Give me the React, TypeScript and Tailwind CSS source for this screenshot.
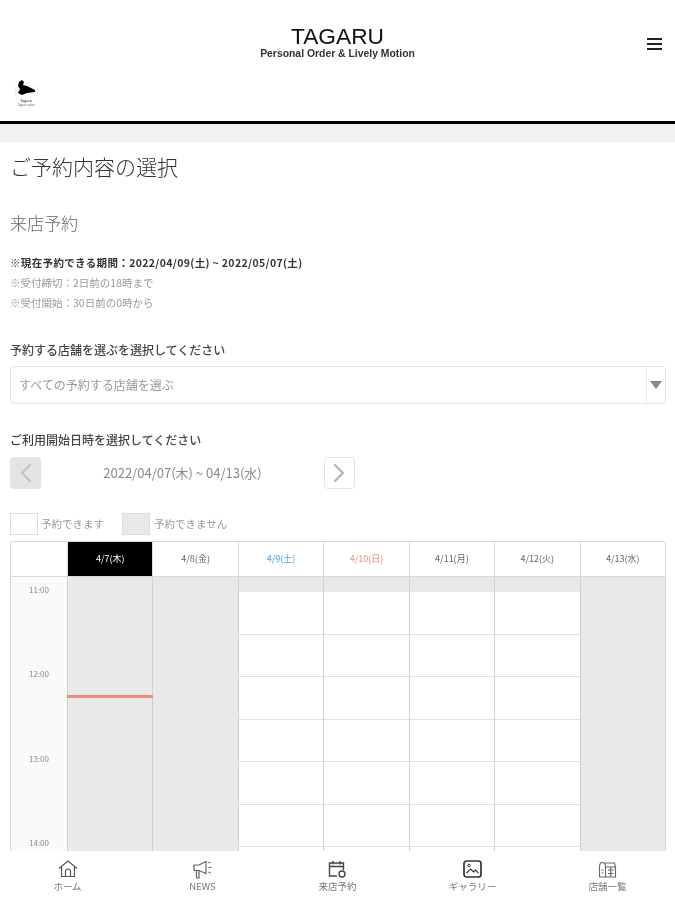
import { ChevronLeft, ChevronRight } from "lucide-react";

const JP = "font-['Noto_Sans_CJK_JP','Noto_Sans',sans-serif]";

const DAYS = [
  { label: "4/7(木)", color: "text-white", bg: "bg-black", open: false },
  { label: "4/8(金)", color: "text-[#666]", bg: "bg-white", open: false },
  { label: "4/9(土)", color: "text-[#4a9fdc]", bg: "bg-white", open: true },
  { label: "4/10(日)", color: "text-[#f08a80]", bg: "bg-white", open: true },
  { label: "4/11(月)", color: "text-[#666]", bg: "bg-white", open: true },
  { label: "4/12(火)", color: "text-[#666]", bg: "bg-white", open: true },
  { label: "4/13(水)", color: "text-[#666]", bg: "bg-white", open: false },
];

const SLOTS = [0, 1, 2, 3, 4, 5, 6];
const HOURS = ["11:00", "12:00", "13:00", "14:00"];

function HomeIcon() {
  return (
    <svg width="20" height="18" viewBox="0 0 20 18" fill="none" stroke="#555" strokeWidth="1.2">
      <path d="M1 8.5L10 1l9 7.5" />
      <path d="M3.5 7v9.5h13V7" />
      <path d="M7.5 16.5v-5a2.5 2.5 0 0 1 5 0v5" />
    </svg>
  );
}

function NewsIcon() {
  return (
    <svg width="20" height="19" viewBox="0 0 20 19" fill="none" stroke="#666" strokeWidth="1.2">
      <path d="M1 5h5l7-3.5v12L6 10.5H1z" />
      <path d="M3.5 10.5V18h2.5v-7.5" />
      <path d="M15.5 3l2-1M15.5 7.5h3M15.5 12l2 1" />
    </svg>
  );
}

function ReserveIcon() {
  return (
    <svg width="19" height="18" viewBox="0 0 19 18" fill="none" stroke="#444" strokeWidth="1.4">
      <path d="M9 16H1.5V3h14v7" />
      <path d="M1.5 6.5h14M5 1v3.5M12 1v3.5" />
      <circle cx="14" cy="14" r="3" />
    </svg>
  );
}

function GalleryIcon() {
  return (
    <svg width="19" height="18" viewBox="0 0 19 18" fill="none" stroke="#333">
      <rect x="1" y="1" width="17" height="16" rx="2.5" strokeWidth="1.7" />
      <path d="M3.5 13l4-4 3 3 2-2 3 3" strokeWidth="1.1" />
      <circle cx="6" cy="5.5" r="1.3" strokeWidth="1" />
    </svg>
  );
}

function ShopIcon() {
  return (
    <svg width="19" height="17" viewBox="0 0 19 17" fill="none" stroke="#666" strokeWidth="1.1">
      <path d="M1.5 6v10h16V6" />
      <path d="M1.5 6c0-3 1-4.5 3-4.5S7.500 3 7.500 6" />
      <path d="M7 2h9.500l1 4h-10" />
      <path d="M7.500 6v10M10 9h5.500M10 12.500h5.500M12.700 6v10" />
      <path d="M3.500 9h2M3.500 12h2" />
    </svg>
  );
}

function Logo() {
  return (
    <div className="flex w-[28px] flex-col items-center">
      <svg width="26" height="19" viewBox="0 0 26 19">
        <path d="M1 8l5-1M25 7l-4 2M2 8l1 9M25 7l-1 10" stroke="#e8e8e8" strokeWidth="0.8" fill="none" />
        <path d="M6 2l3-2 2 2-1 3 4 1 8 4v2l-8 1-5 2-4-2 2-4-2-3z" fill="#000" />
      </svg>
      <span className="font-['Liberation_Sans',sans-serif] text-[4px] leading-[4px] text-[#333]">Tagaru</span>
      <span className="font-['Liberation_Sans',sans-serif] text-[3px] leading-[4px] text-[#666]">Tagaru salon</span>
    </div>
  );
}

function TimeColumn() {
  return (
    <div className="flex flex-col bg-[#fafafa]">
      {HOURS.map((hour) => (
        <div key={hour} className="h-[84.4px] pt-[6px] text-center text-[8px] leading-[14px] text-[#888]">
          {hour}
        </div>
      ))}
    </div>
  );
}

function DayColumn({ open }: { open: boolean }) {
  if (!open) {
    return <div className="h-full border-l border-[#d0d0d0] bg-[#e9e9e9]" />;
  }
  return (
    <div className="h-full border-l border-[#d0d0d0] bg-white">
      <div className="h-[15px] bg-[#e9e9e9]" />
      {SLOTS.map((slot) => (
        <div key={slot} className="h-[42.5px] border-b border-[#e0e0e0]" />
      ))}
    </div>
  );
}

function Calendar() {
  return (
    <div className="overflow-hidden rounded-t-[3px] border border-b-0 border-[#d8d8d8]">
      <div className="grid h-[35px] grid-cols-[56px_repeat(7,1fr)] border-b border-[#d8d8d8]">
        <div className="bg-white" />
        {DAYS.map((day) => (
          <div
            key={day.label}
            className={`flex items-center justify-center border-l border-[#d8d8d8] text-[9px] ${day.bg} ${day.color}`}
          >
            {day.label}
          </div>
        ))}
      </div>
      <div className="relative grid h-[280px] grid-cols-[56px_repeat(7,1fr)]">
        <TimeColumn />
        {DAYS.map((day) => (
          <DayColumn key={day.label} open={day.open} />
        ))}
        <div className="absolute left-[56px] top-[118px] h-[3px] w-[86px] bg-[#f08a7a]" />
      </div>
    </div>
  );
}

function NavItem({ icon, label }: { icon: React.ReactNode; label: string }) {
  return (
    <div className="flex flex-col items-center">
      <div className="flex h-[20px] items-center">{icon}</div>
      <span className="mt-[1px] text-[9.5px] leading-[12px] text-[#777]">{label}</span>
    </div>
  );
}

export default function App() {
  return (
    <div className={`flex h-[900px] w-[675px] flex-col overflow-hidden bg-white blur-[0.5px] ${JP}`}>
      <header className="h-[124px] shrink-0 border-b-[3px] border-black bg-white">
        <div className="relative flex h-[76px] flex-col items-center pt-[25px]">
          <div className="font-['Liberation_Sans',sans-serif] text-[22.7px] leading-[22px] text-[#111]">TAGARU</div>
          <div className="mt-[1px] font-['Liberation_Sans',sans-serif] text-[10.4px] font-bold leading-[12px] text-[#333]">
            Personal Order &amp; Lively Motion
          </div>
          <div className="absolute right-[13px] top-[38px] flex w-[15px] flex-col gap-[3px]">
            <span className="h-[2px] bg-[#222]" />
            <span className="h-[2px] bg-[#222]" />
            <span className="h-[2px] bg-[#222]" />
          </div>
        </div>
        <div className="pl-[12px] pt-[4px]">
          <Logo />
        </div>
      </header>

      <div className="h-[18px] shrink-0 bg-[#f2f2f2]" />

      <main className="flex-1 overflow-hidden pl-[10px] pr-[9px]">
        <h1 className="mt-[10px] text-[21px] font-light leading-[28px] text-[#333]">ご予約内容の選択</h1>
        <h2 className="mt-[31px] text-[17px] font-light leading-[24px] text-[#666]">来店予約</h2>

        <div className="mt-[18px] text-[10.5px] leading-[20px] text-[#999]">
          <p className="font-bold tracking-[0.35px] text-[#333]">※現在予約できる期間：2022/04/09(土) ~ 2022/05/07(土)</p>
          <p>※受付締切：2日前の18時まで</p>
          <p>※受付開始：30日前の0時から</p>
        </div>

        <p className="mt-[28px] text-[12px] font-medium leading-[18px] text-[#444]">予約する店舗を選ぶを選択してください</p>
        <div className="mt-[7px] flex h-[38px] items-center justify-between rounded-[4px] border border-[#e2e2e2] pl-[8px]">
          <span className="text-[12px] text-[#999]">すべての予約する店舗を選ぶ</span>
          <div className="flex h-full w-[19px] items-center justify-center border-l border-[#ececec]">
            <span className="h-0 w-0 border-x-[6px] border-t-[8px] border-x-transparent border-t-[#888]" />
          </div>
        </div>

        <p className="mt-[27px] text-[12px] font-medium leading-[18px] text-[#444]">ご利用開始日時を選択してください</p>
        <div className="mt-[8px] flex h-[32px] w-[345px] items-center justify-between">
          <div className="flex h-[32px] w-[31px] items-center justify-center rounded-[4px] bg-[#e4e4e4]">
            <ChevronLeft size={32} strokeWidth={1.8} className="shrink-0 text-[#c4c4c4]" />
          </div>
          <span className="text-[13px] text-[#888]">2022/04/07(木) ~ 04/13(水)</span>
          <div className="flex h-[32px] w-[31px] items-center justify-center rounded-[4px] border border-[#e4e4e4]">
            <ChevronRight size={32} strokeWidth={1.8} className="shrink-0 text-[#b4b4b4]" />
          </div>
        </div>

        <div className="mt-[24px] flex h-[22px] items-center text-[10.5px] text-[#999]">
          <span className="h-[22px] w-[28px] border border-[#dcdcdc] bg-white" />
          <span className="ml-[3px] w-[81px]">予約できます</span>
          <span className="h-[22px] w-[28px] border border-[#dcdcdc] bg-[#e9e9e9]" />
          <span className="ml-[4px]">予約できません</span>
        </div>

        <div className="mt-[6px]">
          <Calendar />
        </div>
      </main>

      <nav className="grid h-[49px] shrink-0 grid-cols-5 bg-white pt-[8px]">
        <NavItem icon={<HomeIcon />} label="ホーム" />
        <NavItem icon={<NewsIcon />} label="NEWS" />
        <NavItem icon={<ReserveIcon />} label="来店予約" />
        <NavItem icon={<GalleryIcon />} label="ギャラリー" />
        <NavItem icon={<ShopIcon />} label="店舗一覧" />
      </nav>
    </div>
  );
}
